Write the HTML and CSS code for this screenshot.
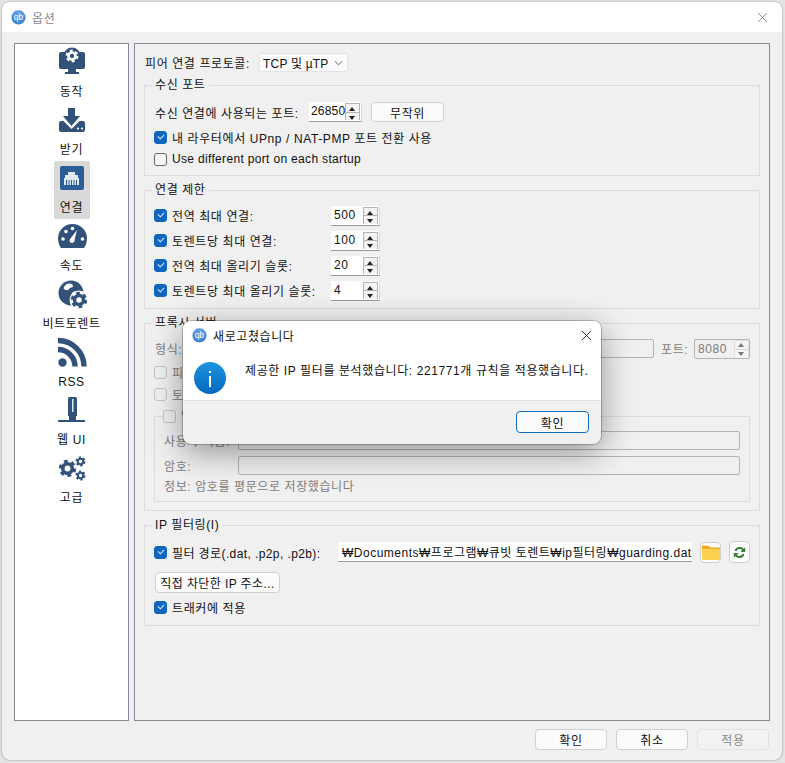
FILE: index.html
```html
<!DOCTYPE html>
<html lang="ko">
<head>
  <meta charset="UTF-8" />
  <title>옵션</title>
  <link rel="stylesheet" href="styles.css">
</head>
<body>
  <svg class="defs" width="0" height="0">
    <symbol id="qb" viewBox="0 0 16 16">
      <circle cx="8" cy="8" r="7.5" fill="#3f86d6"/>
      <circle cx="8" cy="5" r="6" fill="#77aee8" opacity=".5"/>
      <text x="8" y="11" text-anchor="middle" font-size="9" font-family="Liberation Sans" letter-spacing="0" fill="#fff">qb</text>
    </symbol>
    <symbol id="gear" viewBox="0 0 24 24">
      <circle cx="12" cy="12" r="8.5" fill="none" stroke="currentColor" stroke-width="5" stroke-dasharray="4.45 4.45"/>
      <circle cx="12" cy="12" r="6" fill="none" stroke="currentColor" stroke-width="4.6"/>
    </symbol>
  </svg>

  <div class="window">
    <div class="titlebar">
      <svg class="app-icon"><use href="#qb"/></svg>
      <span class="title-text">옵션</span>
      <svg class="close close-dim" viewBox="0 0 12 12"><path d="M1 1l10 10M11 1L1 11"/></svg>
    </div>

    <div class="content">
      <div class="panels">
        <div class="sidebar">
          <div class="side-item">
            <svg class="side-icon" viewBox="0 0 30 30">
              <rect x="2" y="5" width="26" height="17" rx="2" fill="#33527a"/>
              <path d="M11 22h8v3h3v2H8v-2h3z" fill="#33527a"/>
              <circle cx="15" cy="9" r="8.500" fill="#33527a"/>
              <use href="#gear" x="8" y="2" width="14" height="14" color="#fff"/>
            </svg>
            <span>동작</span>
          </div>
          <div class="side-item">
            <svg class="side-icon" viewBox="0 0 30 30">
              <path d="M11 3h7v8h5l-8.500 10L6 11h5z" fill="#33527a"/>
              <path d="M4 16h2.500l8 8 8-8H26a2 2 0 0 1 2 2v7a2 2 0 0 1-2 2H4a2 2 0 0 1-2-2v-7a2 2 0 0 1 2-2z" fill="#33527a"/>
              <circle cx="21" cy="23.500" r="1.100" fill="#fff"/><circle cx="25" cy="23.500" r="1.100" fill="#fff"/>
            </svg>
            <span>받기</span>
          </div>
          <div class="side-item active">
            <svg class="side-icon" viewBox="0 0 30 30">
              <rect x="3" y="3" width="24" height="24" rx="2" fill="#2c5e96"/>
              <path d="M11 9h7v3h3v3h1v7H7v-7h1v-3h3z" fill="#dfe7f0"/>
              <path d="M9.500 17v5M12 17v5M14.500 17v5M17 17v5M19.500 17v5" stroke="#2c5e96" stroke-width="1"/>
            </svg>
            <span>연결</span>
          </div>
          <div class="side-item">
            <svg class="side-icon" viewBox="0 0 30 30">
              <path d="M15.500 3A14.500 14.500 0 0 1 30 17c0 4-1 7-3 10H4c-2-3-3-6-3-10A14.500 14.500 0 0 1 15.500 3z" fill="#33527a"/>
              <path d="M20 9l-2.500 10a2.500 2.500 0 1 1-4-1.500z" fill="#fff"/>
              <circle cx="6" cy="18" r="1.800" fill="#fff"/><circle cx="9" cy="10.500" r="1.800" fill="#fff"/>
              <circle cx="15.500" cy="7.500" r="1.800" fill="#fff"/><circle cx="25.500" cy="18" r="1.800" fill="#fff"/>
            </svg>
            <span>속도</span>
          </div>
          <div class="side-item">
            <svg class="side-icon" viewBox="0 0 30 30">
              <circle cx="14" cy="14" r="12.500" fill="#33527a"/>
              <path d="M10 5c3-1 6 0 6 2s-3 1-4 3-4 1-5 0 1-4 3-5zM16 13c2-1 4 0 4 2l-4 3c-2 0-2-3 0-5z" fill="#fff"/>
              <circle cx="22" cy="21" r="9.500" fill="#fff"/>
              <use href="#gear" x="13" y="12" width="18" height="18" color="#33527a"/>
            </svg>
            <span>비트토렌트</span>
          </div>
          <div class="side-item">
            <svg class="side-icon" viewBox="0 0 30 30">
              <circle cx="5.500" cy="25.500" r="4.200" fill="#33527a"/>
              <path d="M1 12.500A17 17 0 0 1 18 29.500M1 3.500A26 26 0 0 1 27 29.500" fill="none" stroke="#33527a" stroke-width="5.400"/>
            </svg>
            <span>RSS</span>
          </div>
          <div class="side-item">
            <svg class="side-icon" viewBox="0 0 30 30">
              <path d="M12.500 2h6a1.500 1.500 0 0 1 1.500 1.500V21h-9V3.500A1.500 1.500 0 0 1 12.500 2z" fill="#33527a"/>
              <rect x="15" y="4" width="1.500" height="13" fill="#dfe7f0"/>
              <rect x="12" y="21" width="7" height="4" fill="#33527a"/>
              <rect x="1" y="25" width="27" height="2" fill="#33527a"/>
            </svg>
            <span>웹 UI</span>
          </div>
          <div class="side-item">
            <svg class="side-icon" viewBox="0 0 30 30">
              <use href="#gear" x="1" y="6" width="19" height="19" color="#33527a"/>
              <use href="#gear" x="18" y="3" width="11" height="11" color="#33527a"/>
              <use href="#gear" x="18" y="17" width="11" height="11" color="#33527a"/>
            </svg>
            <span>고급</span>
          </div>
        </div>

        <div class="main">
          <div class="proto-row">
            <span class="proto-label">피어 연결 프로토콜:</span>
            <div class="combo">TCP 및 µTP
              <svg class="chevron" viewBox="0 0 10 6"><path d="M1 1l4 4 4-4"/></svg>
            </div>
          </div>

          <fieldset class="group">
            <legend>수신 포트</legend>
            <div class="port-row">
              <span class="port-label">수신 연결에 사용되는 포트:</span>
              <div class="spin spin-port"><span class="spin-value">26850</span><span class="spin-btns"><i class="up"></i><i class="down"></i></span></div>
              <button class="btn btn-random">무작위</button>
            </div>
            <label class="check-row"><span class="check on"></span>내 라우터에서 UPnp / NAT-PMP 포트 전환 사용</label>
            <label class="check-row latin"><span class="check"></span>Use different port on each startup</label>
          </fieldset>

          <fieldset class="group group-limits">
            <legend>연결 제한</legend>
            <div class="limit-row"><span class="check on"></span><span class="limit-label">전역 최대 연결:</span>
              <div class="spin"><span class="spin-value">500</span><span class="spin-btns"><i class="up"></i><i class="down"></i></span></div></div>
            <div class="limit-row"><span class="check on"></span><span class="limit-label">토렌트당 최대 연결:</span>
              <div class="spin"><span class="spin-value">100</span><span class="spin-btns"><i class="up"></i><i class="down"></i></span></div></div>
            <div class="limit-row"><span class="check on"></span><span class="limit-label">전역 최대 올리기 슬롯:</span>
              <div class="spin"><span class="spin-value">20</span><span class="spin-btns"><i class="up"></i><i class="down"></i></span></div></div>
            <div class="limit-row"><span class="check on"></span><span class="limit-label">토렌트당 최대 올리기 슬롯:</span>
              <div class="spin"><span class="spin-value">4</span><span class="spin-btns"><i class="up"></i><i class="down"></i></span></div></div>
          </fieldset>

          <fieldset class="group group-proxy">
            <legend>프록시 서버</legend>
            <div class="proxy-row">
              <span class="proxy-type">형식:</span>
              <div class="field field-host"></div>
              <span class="proxy-port">포트:</span>
              <div class="spin spin-off"><span class="spin-value">8080</span><span class="spin-btns"><i class="up"></i><i class="down"></i></span></div>
            </div>
            <label class="check-row"><span class="check off"></span>피어 연결에 프록시 사용</label>
            <label class="check-row"><span class="check off"></span>토렌트 전용 프록시 사용</label>
            <fieldset class="group group-auth">
              <legend><span class="check off"></span>인증</legend>
              <div class="auth-row"><span class="auth-label">사용자 이름:</span><div class="field"></div></div>
              <div class="auth-row"><span class="auth-label">암호:</span><div class="field"></div></div>
              <div class="auth-note">정보: 암호를 평문으로 저장했습니다</div>
            </fieldset>
          </fieldset>

          <fieldset class="group group-filter">
            <legend>IP 필터링(I)</legend>
            <div class="filter-row">
              <span class="check on"></span>
              <span class="filter-label">필터 경로(.dat, .p2p, .p2b):</span>
              <div class="path-field">₩Documents₩프로그램₩큐빗 토렌트₩ip필터링₩guarding.dat</div>
              <button class="btn btn-icon">
                <svg class="tool-icon" viewBox="0 0 16 16">
                  <path d="M0 2.500h6l1.500 1.500H16v2H0z" fill="#eaa915"/>
                  <path d="M0 5h16v9a1 1 0 0 1-1 1H1a1 1 0 0 1-1-1z" fill="#fbd04f"/>
                </svg>
              </button>
              <button class="btn btn-icon btn-refresh">
                <svg class="tool-icon tool-small" viewBox="0 0 16 16">
                  <path d="M13 5.500A5.500 5.500 0 0 0 3 6M3 10.500a5.500 5.500 0 0 0 10-.5" fill="none" stroke="#3b7d3c" stroke-width="2.400"/>
                  <path d="M15 1.500v6h-6zM1 14.500v-6h6z" fill="#3b7d3c"/>
                </svg>
              </button>
            </div>
            <button class="btn btn-blocked">직접 차단한 IP 주소...</button>
            <label class="check-row"><span class="check on"></span>트래커에 적용</label>
          </fieldset>
        </div>
      </div>

      <div class="footer">
        <button class="btn btn-foot">확인</button>
        <button class="btn btn-foot">취소</button>
        <button class="btn btn-foot btn-off">적용</button>
      </div>
    </div>

    <div class="dialog">
      <div class="dialog-title">
        <svg class="app-icon"><use href="#qb"/></svg>
        <span class="dialog-title-text">새로고쳤습니다</span>
        <svg class="close" viewBox="0 0 12 12"><path d="M1 1l10 10M11 1L1 11"/></svg>
      </div>
      <div class="dialog-body">
        <svg class="info-icon" viewBox="0 0 32 32">
          <defs><linearGradient id="infoFill" x1="0" y1="0" x2="0" y2="1"><stop offset="0" stop-color="#1e94de"/><stop offset="1" stop-color="#0568c0"/></linearGradient></defs>
          <circle cx="16" cy="16" r="16" fill="url(#infoFill)"/>
          <rect x="15" y="14" width="2" height="11" fill="#fff"/>
          <rect x="15" y="9" width="2" height="2" fill="#fff"/>
        </svg>
        <span class="dialog-text">제공한 IP 필터를 분석했습니다: 221771개 규칙을 적용했습니다.</span>
      </div>
      <div class="dialog-foot">
        <button class="btn btn-ok">확인</button>
      </div>
    </div>
  </div>
</body>
</html>
```

FILE: styles.css
```css
* {
  box-sizing: border-box;
}

body {
  margin: 0;
  width: 785px;
  height: 763px;
  overflow: hidden;
  background: #e4e4e4;
  font-family: "Liberation Sans", "Noto Sans CJK KR", sans-serif;
  font-size: 12px;
  letter-spacing: 0.6px;
  color: #111;
}

.defs {
  position: absolute;
}

.window {
  position: relative;
  margin: 2px 3px 0 2px;
  width: 780px;
  height: 758px;
  display: flex;
  flex-direction: column;
  background: #f0f0f0;
  border-radius: 8px;
  box-shadow: 0 0 2px rgba(0, 0, 0, 0.45);
  overflow: hidden;
}

.titlebar {
  height: 30px;
  flex: none;
  display: flex;
  align-items: center;
  padding: 0 14px 0 9px;
  background: #fff;
}

.app-icon {
  width: 15px;
  height: 15px;
  flex: none;
}

.title-text {
  margin-left: 6px;
  color: #8a8a8a;
  font-size: 12px;
}

.close {
  width: 11px;
  height: 11px;
  margin-left: auto;
  fill: none;
  stroke: #222;
  stroke-width: 1;
}

.close-dim {
  stroke: #888;
}

.content {
  flex: 1;
  display: flex;
  flex-direction: column;
  padding: 11px 12px 10px;
  min-height: 0;
}

.panels {
  flex: 1;
  display: flex;
  gap: 5px;
  min-height: 0;
}

.sidebar {
  width: 115px;
  flex: none;
  padding-top: 1px;
  background: #fff;
  border: 1px solid #838a94;
  display: flex;
  flex-direction: column;
  align-items: center;
}

.side-item {
  width: 36px;
  height: 58px;
  flex: none;
  display: flex;
  flex-direction: column;
  align-items: center;
  white-space: nowrap;
  border-radius: 2px;
  line-height: 16px;
}

.side-item.active {
  background: #d9d9d9;
}

.side-icon {
  width: 30px;
  height: 30px;
  margin: 2px 0 7px;
  flex: none;
}

.main {
  flex: 1;
  padding: 9px 9px 0;
  border: 1px solid #838a94;
  background: #f0f0f0;
}

.proto-row {
  display: flex;
  align-items: center;
  height: 19px;
  margin-bottom: 5px;
}

.proto-label {
  width: 114px;
  margin-left: 1px;
  white-space: nowrap;
}

.combo {
  width: 89px;
  height: 19px;
  display: flex;
  align-items: center;
  padding-left: 3px;
  letter-spacing: 0.2px;
  background: #fbfbfb;
  border: 1px solid #e3e3e3;
  border-radius: 3px;
}

.chevron {
  width: 9px;
  height: 6px;
  margin-left: auto;
  margin-right: 4px;
  fill: none;
  stroke: #555;
}

.group {
  margin: 0 0 6px;
  padding: 9px 9px 5px;
  border: 1px solid #dcdcdc;
  min-width: 0;
}

.group legend {
  margin-left: -2px;
  padding: 0 3px;
  line-height: 16px;
  height: 16px;
}

.port-row {
  display: flex;
  align-items: center;
  height: 20px;
  margin-bottom: 4px;
}

.port-label {
  width: 154px;
  margin-left: 1px;
  white-space: nowrap;
}

.check-row {
  display: flex;
  align-items: center;
  height: 22px;
  white-space: nowrap;
}

.latin {
  letter-spacing: 0.33px;
}

.check {
  width: 13px;
  height: 13px;
  flex: none;
  margin-right: 5px;
  border: 1px solid #666;
  border-radius: 3px;
  background: #f6f6f6;
  display: inline-block;
  position: relative;
}

.check.on {
  background: #0f66bd;
  border-color: #0f66bd;
}

.check.on::after {
  content: "";
  position: absolute;
  left: 3px;
  top: 2px;
  width: 5px;
  height: 3px;
  border-left: 1px solid #dbe8f6;
  border-bottom: 1px solid #dbe8f6;
  transform: rotate(-45deg);
}

.check.off {
  border-color: #c4c4c4;
  background: #f0f0f0;
}

.spin {
  width: 49px;
  height: 20px;
  flex: none;
  display: flex;
  background: #fff;
  border-bottom: 1px solid #9a9a9a;
  border-right: 1px solid #d8d8d8;
}

.spin-value {
  flex: 1;
  padding-left: 3px;
  line-height: 19px;
}

.spin-btns {
  width: 15px;
  display: flex;
  flex-direction: column;
  border: 1px solid #b4b4b4;
  border-width: 1px 1px 0;
  background: #f4f4f4;
  margin: 1px 1px 1px 0;
}

.spin-btns i {
  flex: 1;
  position: relative;
}

.spin-btns .up {
  border-bottom: 1px solid #b4b4b4;
}

.spin-btns i::after {
  content: "";
  position: absolute;
  left: 3px;
  top: 3px;
  border-left: 3px solid transparent;
  border-right: 3px solid transparent;
}

.spin-btns .up::after {
  border-bottom: 4px solid #222;
}

.spin-btns .down::after {
  border-top: 4px solid #222;
}

.spin-port {
  width: 53px;
}

.spin-port .spin-value {
  padding-left: 2px;
  letter-spacing: 0.2px;
}

.btn {
  font: inherit;
  letter-spacing: inherit;
  color: #111;
  background: #fbfbfb;
  border: 1px solid #d0d0d0;
  border-radius: 4px;
  padding: 0;
}

.btn-random {
  width: 73px;
  height: 20px;
  margin-left: 9px;
}

.group-limits {
  padding-top: 5px;
}

.limit-row {
  display: flex;
  align-items: center;
  height: 25px;
}

.limit-label {
  width: 159px;
  white-space: nowrap;
}

.group-proxy {
  padding: 8px 9px 8px;
  color: #7c7c7c;
}

.group-proxy legend {
  color: #111;
}

.group-proxy .group-auth legend {
  color: #7c7c7c;
  display: flex;
  align-items: center;
  margin-left: -1px;
  padding: 0;
}

.proxy-row {
  display: flex;
  align-items: center;
  height: 19px;
  margin-bottom: 3px;
}

.proxy-type {
  margin-left: 1px;
  width: 40px;
}

.field {
  flex: 1;
  height: 19px;
  background: #f0f0f0;
  border: 1px solid #b4b4b4;
  border-radius: 2px;
}

.proxy-port {
  width: 33px;
  margin-left: 7px;
}

.spin-off {
  width: 56px;
  background: #f0f0f0;
  border: 1px solid #b4b4b4;
  border-radius: 2px;
  color: #7c7c7c;
}

.spin-off .spin-btns {
  border-color: #e0e0e0;
  margin: 0;
}

.spin-off .spin-btns .up {
  border-color: #d8d8d8;
}

.spin-off .spin-btns i::after {
  top: 2px;
  border-bottom-color: #777;
  border-top-color: #777;
}

.group-auth {
  margin: 3px 0 0;
  padding: 4px 9px 3px;
}

.auth-row {
  display: flex;
  align-items: center;
  height: 25px;
}

.auth-label {
  width: 74px;
  white-space: nowrap;
}

.auth-note {
  height: 20px;
  line-height: 18px;
  white-space: nowrap;
}

.group-filter {
  padding-top: 9px;
  padding-bottom: 7px;
}

.filter-row {
  display: flex;
  align-items: center;
  height: 20px;
}

.filter-label {
  width: 166px;
  white-space: nowrap;
  letter-spacing: 0.4px;
}

.path-field {
  width: 354px;
  height: 20px;
  overflow: hidden;
  display: flex;
  align-items: center;
  padding-left: 4px;
  background: #fff;
  border-bottom: 1px solid #9a9a9a;
  white-space: nowrap;
  letter-spacing: 0.5px;
}

.btn-icon {
  width: 21px;
  height: 21px;
  margin-left: 8px;
  display: flex;
  align-items: center;
  justify-content: center;
}

.btn-refresh {
  height: 22px;
}

.tool-icon {
  width: 18px;
  height: 18px;
  flex: none;
}

.tool-small {
  width: 13px;
  height: 13px;
}

.btn-blocked {
  display: block;
  width: 125px;
  height: 21px;
  margin: 10px 0 3px 1px;
  letter-spacing: 0.4px;
}

.footer {
  flex: none;
  display: flex;
  justify-content: flex-end;
  gap: 9px;
  padding: 8px 1px 0 0;
}

.btn-foot {
  width: 72px;
  height: 21px;
}

.btn-off {
  color: #8a8a8a;
  background: #f2f2f2;
  border-color: #e2e2e2;
}

.dialog {
  position: absolute;
  left: 181px;
  top: 319px;
  width: 418px;
  height: 123px;
  display: flex;
  flex-direction: column;
  background: #f0f0f0;
  border-radius: 8px;
  overflow: hidden;
  box-shadow: 0 0 0 1px rgba(0, 0, 0, 0.22), 0 8px 32px rgba(0, 0, 0, 0.4);
}

.dialog-title {
  height: 29px;
  flex: none;
  display: flex;
  align-items: center;
  padding: 0 9px;
  background: #fff;
}

.dialog-title-text {
  margin-left: 6px;
}

.dialog-body {
  height: 50px;
  flex: none;
  display: flex;
  padding: 0 11px;
  background: #fff;
  border-bottom: 1px solid #dfdfdf;
  box-sizing: content-box;
}

.info-icon {
  width: 32px;
  height: 32px;
  margin-top: 12px;
  flex: none;
}

.dialog-text {
  margin-left: 19px;
  margin-top: 11px;
  white-space: nowrap;
}

.dialog-foot {
  flex: 1;
  display: flex;
  justify-content: flex-end;
  align-items: flex-start;
  padding: 10px 12px 0 0;
}

.btn-ok {
  width: 73px;
  height: 22px;
  border: 1px solid #0f6cbd;
}
```
